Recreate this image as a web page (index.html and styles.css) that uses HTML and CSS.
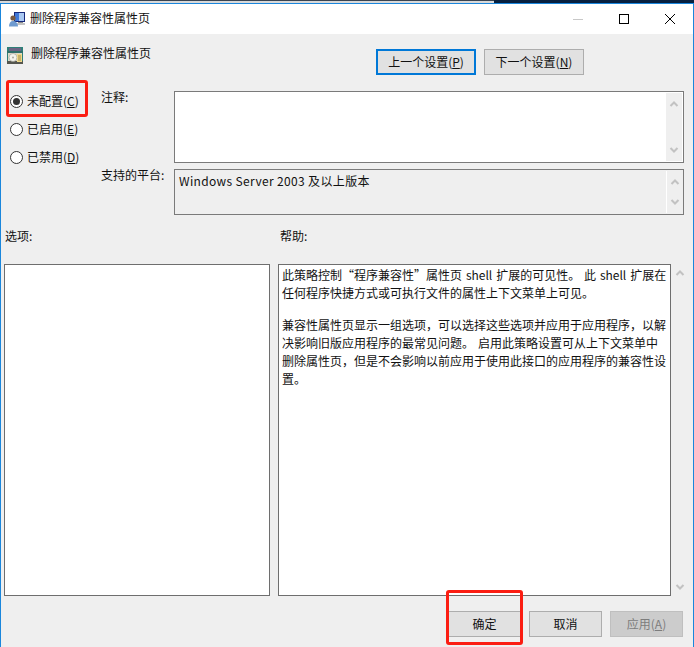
FILE: index.html
```html
<!DOCTYPE html>
<html lang="zh-CN">
<head>
<meta charset="utf-8">
<title>删除程序兼容性属性页</title>
<link rel="stylesheet" href="styles.css">
</head>
<body>
<div class="strip"><div class="strip-left"></div><div class="strip-right"></div></div>
<div class="window">
  <header class="titlebar">
    <svg class="title-icon" width="16" height="16" viewBox="0 0 16 16">
      <rect x="5" y="1" width="11" height="10" fill="#16287a"/>
      <rect x="6" y="2" width="9" height="8" fill="#3f78d8"/>
      <rect x="10" y="2" width="5" height="8" fill="#a9c8f2"/>
      <rect x="9" y="11" width="5" height="1" fill="#8a8a8a"/>
      <rect x="7" y="12" width="9" height="2" fill="#c4c4c4"/>
      <circle cx="4" cy="7" r="2.600" fill="#7a5a40"/>
      <path d="M0 15.500c0-3.500 1.500-5.500 4-5.500s5 2 5 5.500z" fill="#6f9bd0"/>
    </svg>
    <span class="title-text">删除程序兼容性属性页</span>
    <div class="win-controls">
      <svg width="12" height="12" viewBox="0 0 12 12"><path d="M1 6.500h10" stroke="#c8c8c8" fill="none"/></svg>
      <svg width="12" height="12" viewBox="0 0 12 12"><rect x="1.500" y="1.500" width="9" height="9" stroke="#000" fill="none"/></svg>
      <svg width="12" height="12" viewBox="0 0 12 12"><path d="M1 1l10 10M11 1L1 11" stroke="#000" fill="none"/></svg>
    </div>
  </header>
  <main class="content">
    <div class="head">
      <svg class="head-icon" width="16" height="17" viewBox="0 0 16 17">
        <rect x="0" y="0" width="16" height="17" fill="#2f7f78"/>
        <rect x="2" y="1" width="12" height="3" fill="#6d6384"/>
        <rect x="0" y="4" width="16" height="2" fill="#2f6f6a"/>
        <rect x="1" y="6" width="14" height="10" fill="#ddd9c8"/>
        <rect x="0" y="14" width="16" height="3" fill="#55564f"/>
        <circle cx="6" cy="10.500" r="4" fill="#f4f4ee" stroke="#9a9a90" stroke-width=".6"/>
        <circle cx="6" cy="10.500" r="1" fill="#a8a8a0"/>
        <rect x="10" y="7" width="5" height="8" fill="#efd98a"/>
        <path d="M11 9h3M11 11h3M11 13h3" stroke="#8c7a3a" stroke-width=".8"/>
      </svg>
      <span class="head-text">删除程序兼容性属性页</span>
      <div class="nav">
        <button class="btn btn-focus">上一个设置(<u>P</u>)</button>
        <button class="btn">下一个设置(<u>N</u>)</button>
      </div>
    </div>

    <div class="config">
      <div class="radios">
        <label class="radio"><span class="dot on"></span><span>未配置(<u>C</u>)</span></label>
        <label class="radio"><span class="dot"></span><span>已启用(<u>E</u>)</span></label>
        <label class="radio"><span class="dot"></span><span>已禁用(<u>D</u>)</span></label>
      </div>
      <div class="fields">
        <span class="field-label">注释:</span>
        <div class="box box-note">
          <div class="scroll">
            <svg width="10" height="8" viewBox="0 0 10 8"><path d="M1.500 6L5 2.500 8.500 6" class="chev"/></svg>
            <svg width="10" height="8" viewBox="0 0 10 8"><path d="M1.500 2L5 5.500 8.500 2" class="chev"/></svg>
          </div>
        </div>
        <span class="field-label">支持的平台:</span>
        <div class="box box-platform">
          <span class="platform-text">Windows Server 2003 及以上版本</span>
          <div class="scroll">
            <svg width="10" height="8" viewBox="0 0 10 8"><path d="M1.500 6L5 2.500 8.500 6" class="chev"/></svg>
            <svg width="10" height="8" viewBox="0 0 10 8"><path d="M1.500 2L5 5.500 8.500 2" class="chev"/></svg>
          </div>
        </div>
      </div>
    </div>

    <div class="panes">
      <div class="pane-left">
        <div class="pane-label">选项:</div>
        <div class="pane-box options"></div>
      </div>
      <div class="pane-right">
        <div class="pane-label">帮助:</div>
        <div class="help-row">
          <div class="pane-box help">
            <p>此策略控制“程序兼容性”属性页 shell 扩展的可见性。 此 shell 扩展在<br>任何程序快捷方式或可执行文件的属性上下文菜单上可见。</p>
            <p>兼容性属性页显示一组选项，可以选择这些选项并应用于应用程序，以解<br>决影响旧版应用程序的最常见问题。 启用此策略设置可从上下文菜单中<br>删除属性页，但是不会影响以前应用于使用此接口的应用程序的兼容性设<br>置。</p>
          </div>
          <div class="help-scroll">
            <svg width="10" height="8" viewBox="0 0 10 8"><path d="M1.500 6L5 2.500 8.500 6" class="chev"/></svg>
            <svg width="10" height="8" viewBox="0 0 10 8"><path d="M1.500 2L5 5.500 8.500 2" class="chev"/></svg>
          </div>
        </div>
      </div>
    </div>

    <footer class="actions">
      <button class="btn btn-action">确定</button>
      <button class="btn btn-action">取消</button>
      <button class="btn btn-action btn-disabled">应用(<u>A</u>)</button>
    </footer>
  </main>
  <div class="mark mark-radio"></div>
  <div class="mark mark-ok"></div>
</div>
</body>
</html>
```
FILE: styles.css
```css
* { box-sizing: border-box; }
html, body { margin: 0; padding: 0; }
body {
  width: 694px;
  height: 647px;
  overflow: hidden;
  font-family: "Noto Sans CJK SC", "Noto Sans", sans-serif;
  font-size: 12px;
  line-height: 18px;
  color: #111;
  background: #efefef;
}
.strip { display: flex; height: 3px; }
.strip-left { width: 494px; background: #d9d9d9; border-top: 1px solid #3a4450; }
.strip-right { flex: 1; background: #07203f; }
.window {
  position: relative;
  height: 644px;
  border: 1px solid #1a86dc;
  border-bottom: 0;
  display: flex;
  flex-direction: column;
}
.titlebar {
  height: 30px;
  background: #fff;
  display: flex;
  align-items: center;
  padding-left: 8px;
  flex: none;
}
.title-icon { flex: none; }
.title-text { margin: -2px 0 0 5px; }
.win-controls {
  margin-left: auto;
  margin-right: 17px;
  display: flex;
  gap: 34px;
}
.content { flex: 1; background: #efefef; display: flex; flex-direction: column; }
.head { display: flex; height: 46px; padding-left: 6px; }
.head-icon { margin-top: 13px; flex: none; }
.head-text { margin: 10px 0 0 8px; }
.nav { margin-left: auto; margin-right: 109px; margin-top: 15px; display: flex; gap: 8px; }
.btn {
  font: inherit;
  color: inherit;
  width: 100px;
  height: 26px;
  padding: 0;
  background: #e1e1e1;
  border: 1px solid #adadad;
  border-radius: 0;
}
.btn-focus { border: 2px solid #0078d7; }
.config { display: flex; margin-top: 11px; }
.radios { width: 100px; padding: 1px 0 0 9px; display: flex; flex-direction: column; gap: 10px; }
.radio { display: flex; align-items: center; gap: 4px; height: 18px; }
.dot {
  width: 13px;
  height: 13px;
  border: 1px solid #333;
  border-radius: 50%;
  background: #fff;
  display: flex;
  align-items: center;
  justify-content: center;
}
.dot.on::after {
  content: "";
  width: 7px;
  height: 7px;
  border-radius: 50%;
  background: #333;
}
.fields {
  width: 583px;
  display: grid;
  grid-template-columns: 73px 510px;
  row-gap: 6px;
}
.field-label { margin-top: -3px; }
.box { border: 1px solid #7a7a7a; display: flex; padding: 1px; }
.box-note { height: 72px; background: #fff; }
.box-platform { height: 46px; background: #efefef; }
.platform-text { padding: 1px 0 0 3px; letter-spacing: .35px; }
.scroll {
  margin-left: auto;
  width: 16px;
  background: #efefef;
  display: flex;
  flex-direction: column;
  justify-content: space-between;
  align-items: center;
  padding: 7px 0;
}
.box-platform .scroll { border-left: 1px solid #fff; }
.chev { fill: none; stroke: #c2c2c2; stroke-width: 2; }
.panes { display: flex; margin-top: 12px; }
.pane-left { width: 274px; padding-left: 3px; }
.pane-right { padding-left: 3px; }
.pane-label { height: 37px; margin-left: 1px; }
.pane-right .pane-label { margin-left: 2px; }
.pane-box { border: 1px solid #6e6e6e; background: #fff; height: 332px; }
.options { width: 266px; }
.help { width: 393px; padding: 1px 3px; white-space: nowrap; word-spacing: 1.2px; }
.help p { margin: 0 0 14px; }
.help-row { display: flex; }
.help-scroll {
  width: 17px;
  height: 332px;
  display: flex;
  flex-direction: column;
  justify-content: space-between;
  align-items: center;
  padding: 5px 0;
}
.actions { display: flex; justify-content: flex-end; gap: 8px; margin-top: 15px; padding-right: 10px; }
.btn-action { width: 73px; }
.btn-disabled { background: #ccc; border-color: #bfbfbf; color: #7d7d7d; }
.mark { position: absolute; border: 3px solid #fb1d12; border-radius: 3px; }
.mark-radio { left: 5px; top: 76px; width: 82px; height: 37px; }
.mark-ok { left: 445px; top: 586px; width: 77px; height: 55px; }
```
